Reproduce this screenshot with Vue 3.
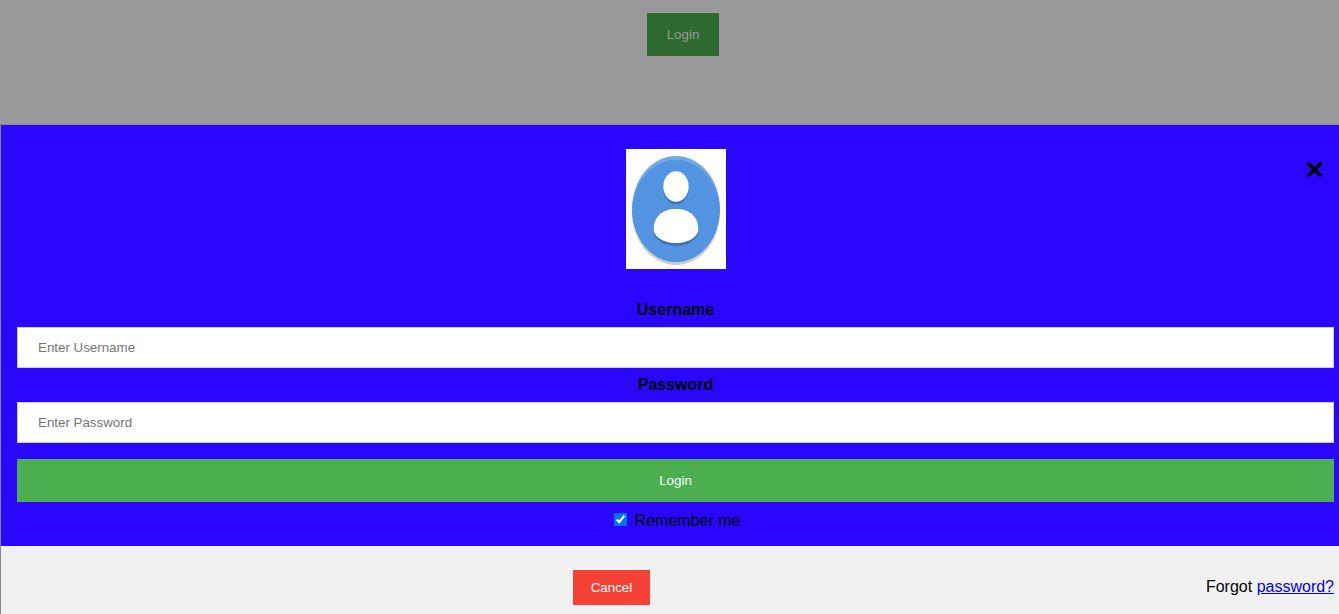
<script setup>
import { ref } from 'vue'

const username = ref('')
const password = ref('')
const remember = ref(true)
</script>

<template>
  <div class="page">
    <header class="top">
      <button type="button" class="btn open">Login</button>
    </header>
    <form class="modal" @submit.prevent>
      <div class="portrait">
        <button type="button" class="close" aria-label="Close">×</button>
        <svg class="avatar" viewBox="0 0 100 120" role="img" aria-label="Avatar">
          <defs>
            <clipPath id="disc"><ellipse cx="50" cy="60" rx="44" ry="53" /></clipPath>
          </defs>
          <rect width="100" height="120" fill="#fff" />
          <ellipse cx="50" cy="63" rx="44" ry="53" fill="#c8cccc" />
          <ellipse cx="50" cy="60" rx="44" ry="53" fill="#73a6e3" />
          <ellipse cx="50" cy="64" rx="44" ry="53" fill="#5294e2" clip-path="url(#disc)" />
          <g fill="#4076b5">
            <ellipse cx="50" cy="40" rx="12.7" ry="15.2" />
            <path d="M50 63C62 63 72.3 70 72.3 82C72.3 91 61 97 50 97S27.7 91 27.7 82C27.7 70 38 63 50 63Z" />
          </g>
          <g fill="#fff">
            <ellipse cx="50" cy="37.5" rx="12.7" ry="15.2" />
            <path d="M50 60C64 60 72.3 68 72.3 80C72.3 88 62 94 50 94S27.7 88 27.7 80C27.7 68 36 60 50 60Z" />
          </g>
        </svg>
      </div>
      <div class="fields">
        <label class="caption" for="username">Username</label>
        <input id="username" v-model="username" class="text" type="text" placeholder="Enter Username" />
        <label class="caption" for="password">Password</label>
        <input id="password" v-model="password" class="text" type="password" placeholder="Enter Password" />
        <button type="submit" class="btn submit">Login</button>
        <div class="remember">
          <input id="remember" v-model="remember" type="checkbox" />
          <label for="remember">Remember me</label>
        </div>
      </div>
      <footer class="bottom">
        <div class="actions">
          <button type="button" class="cancel">Cancel</button>
        </div>
        <span class="forgot">Forgot <a href="#">password?</a></span>
      </footer>
    </form>
  </div>
</template>

<style>
body {
  margin: 0;
  background: #999;
}
</style>

<style scoped>
.page {
  display: flex;
  flex-direction: column;
  min-height: 100vh;
  background: #999;
  font-family: Arial, "Liberation Sans", Helvetica, sans-serif;
  font-size: 16px;
  line-height: 18px;
  color: #000;
}
button,
.text {
  box-sizing: border-box;
  font-family: inherit;
  font-size: smaller;
  line-height: 15px;
  border-radius: 0;
}
button {
  border: none;
  cursor: pointer;
}
.top {
  display: flex;
  justify-content: center;
  padding: 13px 0 68px 27px;
}
.btn {
  padding: 14px 20px;
  background: #4caf50;
  color: #fff;
}
.open {
  background: #2e6930;
  color: #999;
}
.modal {
  flex: 1;
  display: flex;
  flex-direction: column;
  border-top: 1px solid #888;
  border-left: 1px solid #888;
  background: #2a06ff;
}
.portrait {
  position: relative;
  display: flex;
  justify-content: center;
  padding: 24px 5px 16px 16px;
}
.avatar {
  width: 100px;
  height: 120px;
}
.close {
  position: absolute;
  top: 24px;
  right: 15px;
  padding: 0;
  background: none;
  color: #000;
  font-size: 32px;
  line-height: 40px;
  font-weight: bold;
}
.fields {
  display: flex;
  flex-direction: column;
  padding: 16px 5px 16px 16px;
}
.caption {
  text-align: center;
  font-weight: bold;
}
.text {
  width: 100%;
  margin: 8px 0;
  padding: 12px 20px;
  border: 1px solid #ccc;
  background: #fff;
}
.text::placeholder {
  color: #757575;
}
.submit {
  margin: 8px 0;
}
.remember {
  display: flex;
  justify-content: center;
  align-items: flex-start;
  gap: 8px;
  padding-left: 3px;
}
.remember input {
  width: 13px;
  height: 13px;
  margin: 3px 0 0;
}
.remember label {
  padding-top: 2px;
}
.bottom {
  flex: 1;
  display: flex;
  align-items: flex-start;
  padding: 24px 5px 9px 16px;
  background: #f1f1f1;
}
.actions {
  flex: 1;
  display: flex;
  justify-content: center;
}
.cancel {
  padding: 10px 18px;
  background: #f44336;
  color: #fff;
}
.forgot {
  padding-top: 8px;
}
.forgot a {
  color: #0000ee;
}
</style>
